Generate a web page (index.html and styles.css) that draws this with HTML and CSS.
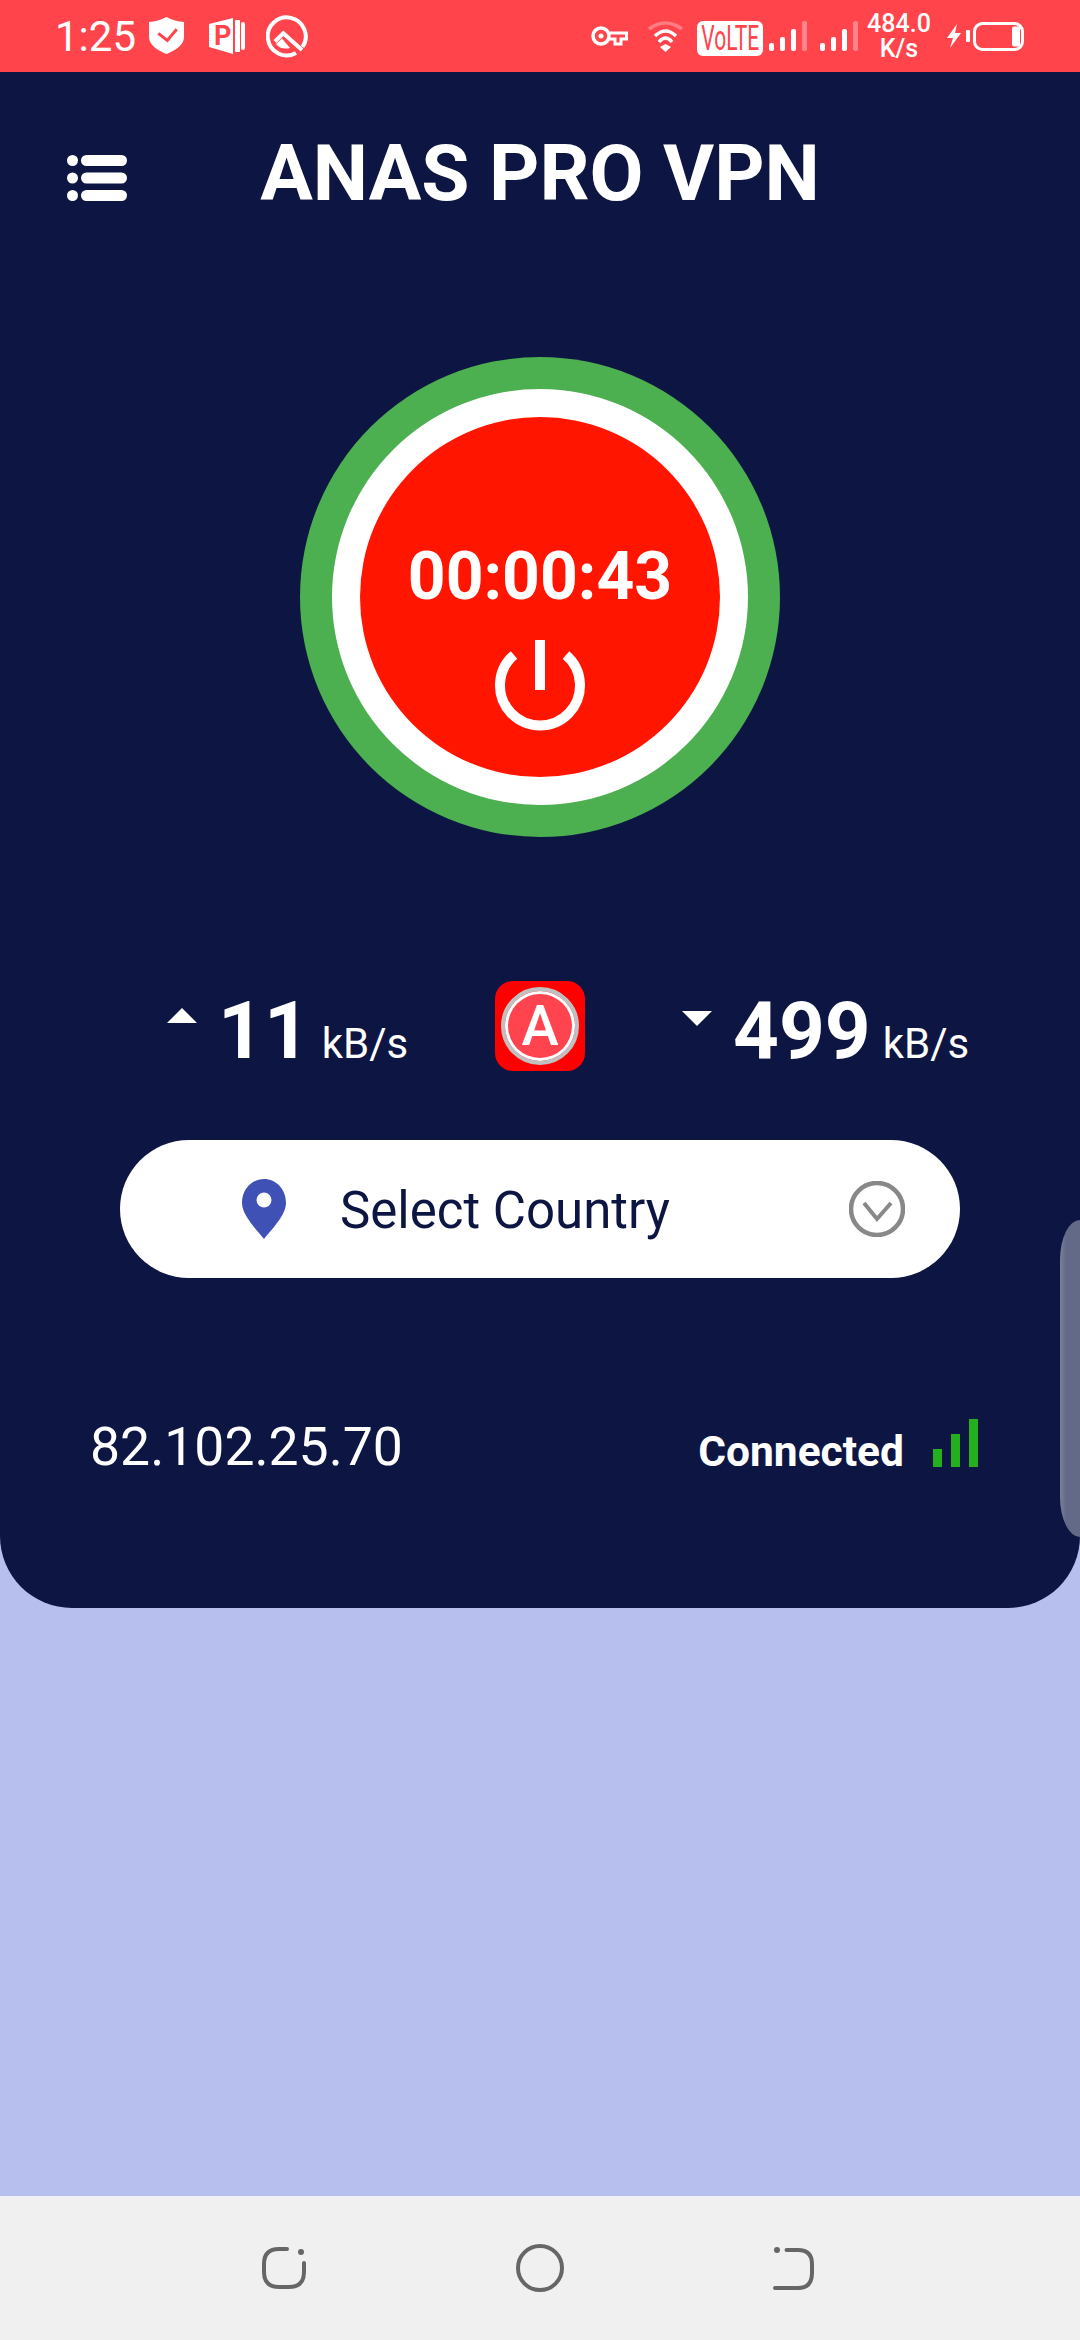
FILE: index.html
```html
<!DOCTYPE html>
<html lang="en">
<head>
    <meta charset="UTF-8">
    <meta name="viewport" content="width=device-width, initial-scale=1.0">
    <title>ANAS PRO VPN</title>
    <link rel="stylesheet" href="styles.css">
</head>
<body>
    <div class="status-bar">
        <div class="status-left">
            <span class="clock">1:25</span>
            <svg class="ic-shield" width="36" height="38" viewBox="0 0 36 38">
                <path d="M17.5 0C23 3 29 4.5 35 5V20C35 28 27 33 17.5 37C8 33 0 28 0 20V5C6 4.5 12 3 17.5 0Z" fill="#fff"/>
                <path d="M9.3 16.3L18.3 23.5L27.7 12.3" fill="none" stroke="#ff444c" stroke-width="3"/>
            </svg>
            <svg class="ic-parking" width="36" height="36" viewBox="0 0 36 36">
                <path d="M0 6L24 0V36L0 29Z" fill="#fff"/>
                <text x="5" y="27" class="ic-letter">P</text>
                <rect x="26" y="2" width="5" height="32" rx="1" fill="#fff"/>
                <rect x="32" y="4" width="4" height="28" rx="2" fill="#fff"/>
            </svg>
            <svg class="ic-q" width="42" height="44" viewBox="0 0 42 44">
                <path d="M36.5 33A19 19 0 1 0 30 39" fill="none" stroke="#fff" stroke-width="4"/>
                <path d="M9 27.500L17.300 19.300L36 36" fill="none" stroke="#fff" stroke-width="4"/>
                <path d="M10 30L16 24.500L24 34C18 35.500 13 34 10 30Z" fill="#fff"/>
            </svg>
        </div>
        <div class="status-right">
            <svg width="37" height="20" viewBox="0 0 37 20">
                <circle cx="10" cy="10" r="8" fill="none" stroke="#fff" stroke-width="3.5"/>
                <circle cx="10" cy="10" r="2.5" fill="#fff"/>
                <path d="M18 7H35.5V13H30V18H24V13H18" fill="none" stroke="#fff" stroke-width="3"/>
            </svg>
            <svg class="ic-wifi" width="37" height="32" viewBox="0 0 37 32">
                <path d="M2 9Q18.500 -3 35 9" fill="none" stroke="#fff" stroke-opacity="0.3" stroke-width="3.5"/>
                <path d="M8 16Q18.500 6 29 16" fill="none" stroke="#fff" stroke-width="3.500"/>
                <path d="M12 22Q18.500 14 25 22" fill="none" stroke="#fff" stroke-width="3.500"/>
                <path d="M13 27L18.500 24L24 27L18.500 32Z" fill="#fff"/>
            </svg>
            <div class="volte"><span>VoLTE</span></div>
            <div class="signal sig-first">
                <i class="s1"></i><i class="s2"></i><i class="s3"></i><i class="s4"></i>
            </div>
            <div class="signal sig-second">
                <i class="s1"></i><i class="s2"></i><i class="s3"></i><i class="s4"></i>
            </div>
            <div class="net-speed">484.0<br>K/s</div>
            <svg class="ic-bolt" width="14" height="24" viewBox="0 0 14 24">
                <path d="M10 0L0 14H6L3 24L14 9H8Z" fill="#fff"/>
            </svg>
            <svg class="ic-battery" width="58" height="29" viewBox="0 0 58 29">
                <rect x="0" y="8" width="4" height="12" rx="1" fill="#fff"/>
                <rect x="8.500" y="1.500" width="48" height="26" rx="8" fill="none" stroke="#fff" stroke-width="3"/>
                <rect x="46" y="4.500" width="8" height="20" rx="2" fill="#fff"/>
            </svg>
        </div>
    </div>

    <div class="panel">
        <div class="header">
            <svg class="menu-icon" width="60" height="46" viewBox="0 0 60 46">
                <circle cx="5.500" cy="5.500" r="5.500" fill="#fff"/>
                <circle cx="5.500" cy="23" r="5.500" fill="#fff"/>
                <circle cx="5.500" cy="40.500" r="5.500" fill="#fff"/>
                <rect x="14" y="0" width="46" height="11" rx="5.500" fill="#fff"/>
                <rect x="14" y="17.500" width="46" height="11" rx="5.500" fill="#fff"/>
                <rect x="14" y="35" width="46" height="11" rx="5.500" fill="#fff"/>
            </svg>
            <h1>ANAS PRO VPN</h1>
        </div>

        <div class="ring-outer">
            <div class="ring-white">
                <div class="power-btn">
                    <div class="timer">00:00:43</div>
                    <svg class="power-icon" width="100" height="100" viewBox="0 0 100 100">
                        <path d="M24 19A40 40 0 1 0 76 19" fill="none" stroke="#fff" stroke-width="10"/>
                        <rect x="45" y="4" width="10" height="50" fill="#fff"/>
                    </svg>
                </div>
            </div>
        </div>

        <div class="stats">
            <div class="stat">
                <span class="arrow arrow-up"></span>
                <span class="stat-num">11</span>
                <span class="stat-unit">kB/s</span>
            </div>
            <div class="logo">
                <div class="logo-ring"><span>A</span></div>
            </div>
            <div class="stat stat-down">
                <span class="arrow arrow-down"></span>
                <span class="stat-num">499</span>
                <span class="stat-unit">kB/s</span>
            </div>
        </div>

        <div class="country-select">
            <svg class="pin" width="44" height="60" viewBox="0 0 44 60">
                <path d="M22 0C34 0 44 10 44 24C44 36 30 50 22 60C14 50 0 36 0 24C0 10 10 0 22 0Z" fill="#3f51b5"/>
                <circle cx="22" cy="21" r="7.500" fill="#fff"/>
            </svg>
            <span class="country-label">Select Country</span>
            <svg class="chevron" width="56" height="56" viewBox="0 0 56 56">
                <circle cx="28" cy="28" r="26" fill="none" stroke="#888" stroke-width="4.500"/>
                <path d="M15 22L28 38L42 22" fill="none" stroke="#888" stroke-width="4"/>
            </svg>
        </div>

        <div class="conn-row">
            <div class="ip">82.102.25.70</div>
            <div class="conn-state">
                <span>Connected</span>
                <div class="bars"><i class="b1"></i><i class="b2"></i><i class="b3"></i></div>
            </div>
        </div>
    </div>

    <div class="filler"></div>

    <div class="nav-bar">
        <svg width="60" height="60" viewBox="0 0 60 60">
            <path d="M32 11H24Q9 11 9 26V34Q9 49 24 49H34Q49 49 49 34V25" fill="none" stroke="#666" stroke-width="4" stroke-linecap="round"/>
            <circle cx="46" cy="14" r="3" fill="#666"/>
        </svg>
        <svg width="60" height="60" viewBox="0 0 60 60">
            <circle cx="30" cy="30" r="22" fill="none" stroke="#666" stroke-width="4"/>
        </svg>
        <svg width="60" height="60" viewBox="0 0 60 60">
            <path d="M21.500 12H33Q47 12 47 26V35Q47 50 33 50H10" fill="none" stroke="#666" stroke-width="4" stroke-linecap="round"/>
            <circle cx="12" cy="12" r="3" fill="#666"/>
        </svg>
    </div>

    <div class="side-handle"></div>
</body>
</html>
```

FILE: styles.css
```css
html, body {
    margin: 0;
    padding: 0;
}

body {
    position: relative;
    width: 1080px;
    height: 2340px;
    overflow: hidden;
    display: flex;
    flex-direction: column;
    background: #b7bfef;
    font-family: Roboto, "Liberation Sans", sans-serif;
    color: #fff;
}

/* status bar */
.status-bar {
    height: 72px;
    flex: none;
    background: #ff444c;
    display: flex;
    justify-content: space-between;
    align-items: center;
    padding: 0 56px 0 55px;
}

.status-left,
.status-right {
    display: flex;
    align-items: center;
}

.clock {
    font-size: 42px;
    width: 79px;
}

.ic-shield { margin-left: 15px; }
.ic-parking { margin-left: 24px; }
.ic-q { margin-left: 21px; }
.ic-letter {
    font-family: Roboto, sans-serif;
    font-weight: 700;
    font-size: 27px;
    fill: #ff444c;
}

.ic-wifi { margin-left: 19px; }

.volte {
    width: 66px;
    height: 35px;
    margin: 4px 0 0 13px;
    background: #fff;
    border-radius: 6px;
    display: flex;
    justify-content: center;
    align-items: center;
}

.volte span {
    display: block;
    flex: none;
    color: #ff444c;
    font-size: 35px;
    line-height: 35px;
    transform: scaleX(0.6);
}

.signal {
    display: flex;
    align-items: flex-end;
    gap: 6px;
    height: 30px;
}

.sig-first { margin-left: 6px; }
.sig-second { margin-left: 13px; }

.signal i {
    display: block;
    width: 5px;
    background: #fff;
    border-radius: 2px;
}

.s1 { height: 8px; }
.s2 { height: 14px; }
.s3 { height: 22px; }
.signal .s4 { height: 30px; background: rgba(255,255,255,0.35); }

.net-speed {
    width: 64px;
    margin-left: 9px;
    font-size: 25px;
    line-height: 25px;
    font-weight: 500;
    text-align: center;
}

.ic-bolt { margin-left: 16px; }
.ic-battery { margin-left: 5px; }

/* main panel */
.panel {
    height: 1536px;
    flex: none;
    background: #0d1642;
    border-radius: 0 0 72px 72px;
    box-sizing: border-box;
}

.header {
    display: grid;
    grid-template-columns: 1fr auto 1fr;
    align-items: center;
    height: 120px;
    padding-top: 41px;
}

.header h1 {
    grid-column: 2;
    grid-row: 1;
    margin: 0;
    font-size: 78.3px;
    line-height: 120px;
    font-weight: 700;
}

.menu-icon {
    grid-column: 1;
    grid-row: 1;
    margin: 9px 0 0 67px;
}

.ring-outer {
    width: 480px;
    height: 480px;
    margin: 124px auto 0;
    border-radius: 50%;
    background: #4caf50;
    display: flex;
    justify-content: center;
    align-items: center;
}

.ring-white {
    width: 416px;
    height: 416px;
    border-radius: 50%;
    background: #fff;
    display: flex;
    justify-content: center;
    align-items: center;
}

.power-btn {
    width: 360px;
    height: 360px;
    box-sizing: border-box;
    padding-top: 121px;
    border-radius: 50%;
    background: #ff1500;
    display: flex;
    flex-direction: column;
    align-items: center;
}

.timer {
    font-size: 66px;
    line-height: 78px;
    font-weight: 700;
}

.power-icon { margin-top: 20px; }

/* speed row */
.stats {
    display: grid;
    grid-template-columns: 328px 90px auto;
    height: 90px;
    margin: 144px 0 0 167px;
}

.stat {
    display: flex;
    align-items: baseline;
    padding-top: 5px;
}

.stat-down { margin-left: 97px; }

.arrow {
    align-self: flex-start;
    width: 0;
    height: 0;
    border-left: 15px solid transparent;
    border-right: 15px solid transparent;
}

.arrow-up {
    margin-top: 22px;
    border-bottom: 15px solid #fff;
}

.arrow-down {
    margin-top: 25px;
    border-top: 15px solid #fff;
}

.stat-num {
    margin-left: 21px;
    font-size: 80px;
    line-height: 90px;
    font-weight: 700;
}

.stat-unit {
    margin-left: 12px;
    font-size: 42px;
}

.logo {
    width: 90px;
    height: 90px;
    border-radius: 18px;
    background: #ff0000;
    display: flex;
    justify-content: center;
    align-items: center;
}

.logo-ring {
    width: 78px;
    height: 78px;
    box-sizing: border-box;
    border: 4px solid #c0c0c0;
    border-radius: 50%;
    background: #ff4450;
    box-shadow: inset 0 0 0 3px #fff;
    display: flex;
    justify-content: center;
    align-items: center;
    font-size: 56px;
    font-weight: 500;
    line-height: 1;
}

/* country pill */
.country-select {
    display: flex;
    align-items: center;
    height: 138px;
    margin: 69px 120px 0;
    padding: 0 55px 0 122px;
    border-radius: 69px;
    background: #fff;
    color: #0d1642;
}

.country-label {
    margin: 2px 0 0 54px;
    font-size: 51px;
}

.chevron { margin-left: auto; }

.conn-row {
    display: flex;
    justify-content: space-between;
    align-items: flex-end;
    margin-top: 141px;
    padding: 0 102px 0 90px;
}

.ip {
    font-size: 53.5px;
    line-height: 40px;
}

.conn-state {
    display: flex;
    align-items: flex-end;
    gap: 29px;
}

.conn-state span {
    font-size: 42.5px;
    line-height: 30px;
    font-weight: 700;
}

.bars {
    display: flex;
    align-items: flex-end;
    gap: 9px;
}

.bars i {
    display: block;
    width: 9px;
    background: #22b01e;
}

.b1 { height: 18px; }
.b2 { height: 33px; }
.b3 { height: 48px; }

.filler { flex: 1; }

.nav-bar {
    height: 144px;
    flex: none;
    background: #f0f0f0;
    display: flex;
    justify-content: center;
    align-items: center;
    gap: 195px;
}

/* edge panel handle, sits over the card */
.side-handle {
    position: absolute;
    top: 1220px;
    right: 0;
    width: 20px;
    height: 317px;
    border-radius: 20px 0 0 20px / 40px 0 0 40px;
    background: linear-gradient(90deg, #7a8099, #636a88 30%);
}
```
